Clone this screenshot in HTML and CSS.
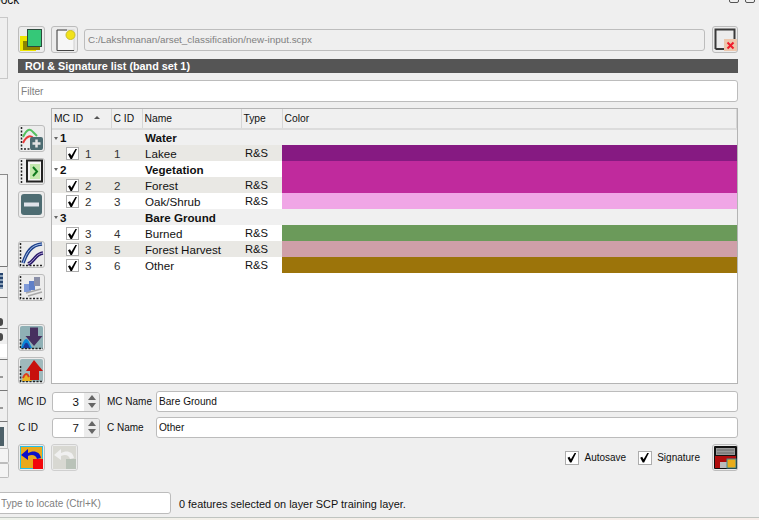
FILE: index.html
```html
<html>
    <head>
        <meta charset="utf-8">
        <title>ROI &amp; Signature list</title>
        <link rel="stylesheet" href="styles.css">
    </head>
    <body>
        <div class="page">
            <!-- dock title, cut off by the top of the window -->
            <div class="dockTitle">
                <span class="dockName">Dock</span>
                <span class="winBtns"><i></i><i></i></span>
            </div>

            <div class="dock">
                <!-- what is left of the panel next to this one -->
                <div class="strip">
                    <div class="stripBox"></div>
                    <div class="stripPanel"></div>
                    <div class="stripItem"><b class="tool blue"></b></div>
                    <div class="stripItem lowDot"><b class="tool dot"></b></div>
                    <div class="stripItem white"><b class="tool dot"></b></div>
                    <div class="stripItem lowTick"><b class="tool tick"></b></div>
                    <div class="stripItem lowTick"><b class="tool tick"></b></div>
                    <div class="stripItem last"><b class="tool slate"></b></div>
                    <div class="stripBtn"></div>
                    <div class="stripBtn"></div>
                </div>

                <div class="panel">
                    <div class="fileRow">
                        <button class="iconBtn">
                            <svg viewBox="0 0 25 25"><rect x="1" y="9" width="16" height="15" fill="#efe600"/><rect x="4" y="14" width="17" height="9" fill="#8a8400"/><rect x="8.500" y="2.500" width="14" height="17" fill="#35c878" stroke="#2b4a3c"/></svg>
                        </button>
                        <button class="iconBtn">
                            <svg viewBox="0 0 25 25"><rect x="5" y="3" width="17" height="20.500" fill="#f6f6f6" stroke="#d0d0d0"/><path d="M5 3V23.500H22" fill="none" stroke="#444"/><path d="M5 3H15" fill="none" stroke="#444"/><circle cx="18.500" cy="8" r="4.500" fill="#f2e21a" stroke="#c9bf2a"/></svg>
                        </button>
                        <input class="pathBox" type="text" value="C:/Lakshmanan/arset_classification/new-input.scpx" readonly>
                        <button class="iconBtn">
                            <svg viewBox="0 0 25 25"><path d="M2.500 22V2.500H21.500V12M2.500 22H12" fill="none" stroke="#3a3a3a" stroke-width="2"/><rect x="11" y="12" width="13" height="12" fill="#ecc7ad"/><path d="M14.500 15.500L20.500 21.500M20.500 15.500L14.500 21.500" stroke="#f01c2c" stroke-width="2"/></svg>
                        </button>
                    </div>

                    <div class="titleBar">ROI &amp; Signature list (band set 1)</div>

                    <input class="textBox filter" type="text" placeholder="Filter">

                    <div class="listRow">
                        <div class="sideBtns">
                            <button class="iconBtn">
                                <svg viewBox="0 0 25 25"><path d="M2.500 1V23H23" fill="none" stroke="#222" stroke-dasharray="2 1.500" stroke-width="1.500"/><path d="M4 11C8 3 11 2 14 6L18 10" fill="none" stroke="#55c060" stroke-width="2"/><path d="M4 17C8 9 12 9 15 13" fill="none" stroke="#e83a3a" stroke-width="2"/><rect x="11" y="11" width="13" height="13" rx="2" fill="#4d6c72"/><path d="M17.500 13.500V21.500M13.500 17.500H21.500" stroke="#e4e4e4" stroke-width="2.500"/></svg>
                            </button>
                            <button class="iconBtn">
                                <svg viewBox="0 0 25 25"><path d="M2.500 1V24" fill="none" stroke="#222" stroke-dasharray="2 1.500" stroke-width="1.500"/><rect x="8" y="1.500" width="15" height="21" fill="#f4f4f4" stroke="#222" stroke-width="2"/><rect x="11" y="5" width="10" height="15" fill="#c3e8ae"/><path d="M14 8L18 12.500L14 17" fill="none" stroke="#0f7a1e" stroke-width="2"/></svg>
                            </button>
                            <button class="iconBtn">
                                <svg viewBox="0 0 25 25"><rect x="2" y="2" width="21" height="21" rx="3" fill="#4d6c72"/><rect x="5" y="10.500" width="15" height="4" fill="#dfe3ea"/></svg>
                            </button>
                            <button class="iconBtn farBtn">
                                <svg viewBox="0 0 25 25"><path d="M1.500 1V23.500H24" fill="none" stroke="#222" stroke-dasharray="2 1.500" stroke-width="1.500"/><path d="M4 21C8 10 12 3 23 2" fill="none" stroke="#1d3f8a" stroke-width="3.500"/><path d="M4 21C8 10 12 3 23 2" fill="none" stroke="#a8c4ea" stroke-width="1"/><path d="M9 22C15 20 16 12 24 11" fill="none" stroke="#2a1a6a" stroke-width="3.500"/><path d="M9 22C15 20 16 12 24 11" fill="none" stroke="#b0a4d8" stroke-width="1"/></svg>
                            </button>
                            <button class="iconBtn">
                                <svg viewBox="0 0 25 25"><path d="M1.500 1V23.500H24" fill="none" stroke="#222" stroke-dasharray="2 1.500" stroke-width="1.500"/><rect x="5" y="9" width="7" height="8" fill="#7f9ad8"/><rect x="10" y="6" width="6" height="9" fill="#5f7fc8"/><rect x="15" y="2" width="6" height="9" fill="#8a8fa8"/><path d="M7 18L22 14M9 21L23 17" stroke="#a8a8a8" stroke-width="1.500"/></svg>
                            </button>
                            <button class="iconBtn farBtn">
                                <svg viewBox="0 0 25 25"><rect x="1" y="1" width="23" height="23" rx="2" fill="#8fb0b5"/><path d="M1.500 14V23.500H24" fill="none" stroke="#222" stroke-dasharray="2 1.500" stroke-width="1.500"/><path d="M2 23C5 13 8 11 11 19L13 23Z" fill="#0a86d8"/><path d="M4 23C6 17 8 16 10 21L11 23Z" fill="#1a3a9a"/><path d="M11 2.500H19V11H23.500L15 21L6.500 11H11Z" fill="#47305f"/></svg>
                            </button>
                            <button class="iconBtn">
                                <svg viewBox="0 0 25 25"><rect x="1" y="1" width="23" height="23" rx="2" fill="#9fb9bc"/><path d="M1.500 8V23.500H24" fill="none" stroke="#222" stroke-dasharray="2 1.500" stroke-width="1.500"/><path d="M3 23C5 14 8 13 11 19L13 23Z" fill="#e8b020"/><path d="M4 20C6 15 8 15 10 19" fill="none" stroke="#d83a20" stroke-width="2"/><path d="M15 2L24 13H20V22H11V13H7Z" fill="#c8100c"/></svg>
                            </button>
                        </div>

                        <div class="listWrap">
                            <table class="sigTable">
                                <colgroup>
                                    <col class="colMc"><col class="colC"><col class="colName"><col class="colType"><col>
                                </colgroup>
                                <thead>
                                    <tr>
                                        <th>MC ID<span class="sortUp"></span></th>
                                        <th>C ID</th>
                                        <th>Name</th>
                                        <th>Type</th>
                                        <th>Color</th>
                                    </tr>
                                </thead>
                                <tbody>
                                    <tr class="groupRow">
                                        <td><span class="twist"></span>1</td><td></td><td>Water</td><td></td><td></td>
                                    </tr>
                                    <tr class="altRow">
                                        <td><span class="chk"></span>1</td><td class="cid">1</td><td>Lakee</td><td class="typeCell">R&amp;S</td><td class="colLakee"></td>
                                    </tr>
                                    <tr class="groupRow white">
                                        <td><span class="twist"></span>2</td><td></td><td>Vegetation</td><td></td><td class="colForest"></td>
                                    </tr>
                                    <tr class="altRow">
                                        <td><span class="chk"></span>2</td><td class="cid">2</td><td>Forest</td><td class="typeCell">R&amp;S</td><td class="colForest"></td>
                                    </tr>
                                    <tr>
                                        <td><span class="chk"></span>2</td><td class="cid">3</td><td>Oak/Shrub</td><td class="typeCell">R&amp;S</td><td class="colOak"></td>
                                    </tr>
                                    <tr class="groupRow">
                                        <td><span class="twist"></span>3</td><td></td><td>Bare Ground</td><td></td><td></td>
                                    </tr>
                                    <tr>
                                        <td><span class="chk"></span>3</td><td class="cid">4</td><td>Burned</td><td class="typeCell">R&amp;S</td><td class="colBurned"></td>
                                    </tr>
                                    <tr class="altRow">
                                        <td><span class="chk"></span>3</td><td class="cid">5</td><td>Forest Harvest</td><td class="typeCell">R&amp;S</td><td class="colHarvest"></td>
                                    </tr>
                                    <tr>
                                        <td><span class="chk"></span>3</td><td class="cid">6</td><td>Other</td><td class="typeCell">R&amp;S</td><td class="colOther"></td>
                                    </tr>
                                </tbody>
                            </table>
                        </div>
                    </div>

                    <div class="formRow">
                        <label class="idLabel">MC ID</label>
                        <div class="spin"><span class="spinVal">3</span><span class="spinArrows"><i class="up"></i><i class="down"></i></span></div>
                        <label class="nameLabel">MC Name</label>
                        <input class="textBox" type="text" value="Bare Ground">
                    </div>
                    <div class="formRow second">
                        <label class="idLabel">C ID</label>
                        <div class="spin"><span class="spinVal">7</span><span class="spinArrows"><i class="up"></i><i class="down"></i></span></div>
                        <label class="nameLabel">C Name</label>
                        <input class="textBox" type="text" value="Other">
                    </div>

                    <div class="actionRow">
                        <button class="iconBtn">
                            <svg viewBox="0 0 25 25"><rect x="1" y="1" width="23" height="23" fill="#22c0e8"/><rect x="2" y="2" width="21" height="21" fill="#e9a91c"/><path d="M22 13C21 6 14 5 9 8L9 4L2 10L9 15V11C13 9 17 10 18 14Z" fill="#0c10c8"/><rect x="14" y="14" width="10" height="10" fill="#f2070c"/></svg>
                        </button>
                        <button class="iconBtn offBtn">
                            <svg viewBox="0 0 25 25"><rect x="1" y="1" width="23" height="23" fill="#d8d8d2"/><path d="M22 13C21 6 14 5 9 8L9 4L2 10L9 15V11C13 9 17 10 18 14Z" fill="#f0f0f0"/><rect x="14" y="14" width="10" height="10" fill="#b9c2b8"/></svg>
                        </button>
                        <div class="pushRight">
                            <span class="chk"></span><span class="chkText">Autosave</span>
                            <span class="chk"></span><span class="chkText">Signature</span>
                            <button class="iconBtn">
                                <svg viewBox="0 0 25 25"><rect x="1" y="1" width="23" height="23" rx="1" fill="#111"/><rect x="3" y="3" width="19" height="7" fill="#999"/><path d="M4 5H21M4 8H21" stroke="#666"/><rect x="2" y="11" width="21" height="12" fill="#b00d0d"/><rect x="7" y="17" width="9" height="6" fill="#bcbcbc"/><rect x="14" y="14" width="9" height="9" fill="#e9ad1c" stroke="#3b8a9a"/></svg>
                            </button>
                        </div>
                    </div>
                </div>
            </div>

            <div class="statusRow">
                <input class="locator" type="text" placeholder="Type to locate (Ctrl+K)">
                <span class="statusText">0 features selected on layer SCP training layer.</span>
            </div>
            <div class="desktop"></div>
        </div>
    </body>
</html>
```

FILE: styles.css
```css
*{
    margin: 0;
    padding: 0;
    box-sizing: border-box;
}
body{
    background-color: #efefef;
    font-family: "Liberation Sans", Arial, sans-serif;
    font-size: 11px;
    color: #111;
    overflow: hidden;
}
.page{
    width: 759px;
    height: 520px;
    display: flex;
    flex-direction: column;
    overflow: hidden;
}

/* top title, only the bottom of it shows */
.dockTitle{
    height: 10px;
    flex: none;
    display: flex;
    justify-content: space-between;
    align-items: flex-end;
    overflow: hidden;
}
.dockName{
    align-self: flex-start;
    line-height: 0;
    font-size: 12px;
    margin-left: -8px;
}
.winBtns{
    display: flex;
    gap: 6px;
    margin-right: 4px;
    margin-bottom: 7px;
}
.winBtns i{
    display: block;
    width: 10px;
    height: 9px;
    border: 1px solid #555;
    border-radius: 2px;
}

.dock{
    height: 482px;
    flex: none;
    display: flex;
}

/* left strip */
.strip{
    width: 9px;
    flex: none;
    padding-top: 7px;
    display: flex;
    flex-direction: column;
}
.stripBox{
    height: 62px;
    border-top: 1px solid #c8c8c8;
    border-bottom: 1px solid #c8c8c8;
    border-right: 1px solid #c8c8c8;
    width: 8px;
    margin-bottom: 95px;
}
.stripPanel{
    height: 92px;
    width: 8px;
    border-top: 1px solid #8a8a8a;
    border-right: 1px solid #8a8a8a;
    background-color: #f3f3f3;
}
.stripItem{
    height: 31px;
    width: 8px;
    border-top: 1px solid #777;
    border-right: 1px solid #c4c4c4;
    padding-top: 9px;
    overflow: hidden;
}
.stripItem.lowDot{
    padding-top: 20px;
}
.stripItem.lowTick{
    padding-top: 13px;
}
.stripItem.white{
    background: linear-gradient(#efefef 50%, #fff 50%, #fff 92%, #efefef 92%);
    padding-top: 4px;
}
.stripItem.last{
    height: 27px;
    padding-top: 5px;
}
.tool{
    display: block;
    width: 3px;
}
.tool.blue{
    height: 16px;
    margin-top: -3px;
    background: repeating-linear-gradient(#26446e 0 2px, #8aa0b8 2px 4px);
}
.tool.dot{
    height: 8px;
    background-color: #4a4a4a;
    border-radius: 0 4px 4px 0;
}
.tool.tick{
    height: 2px;
    margin-top: 3px;
    background-color: #999;
}
.tool.slate{
    width: 4px;
    height: 19px;
    background-color: #4d6068;
}
.stripBtn{
    height: 15px;
    width: 9px;
    background-color: #f4f4f4;
    border: 1px solid #bdbdbd;
    border-left: 0;
    border-radius: 0 2px 2px 0;
}

/* main panel */
.panel{
    width: 729px;
    padding-left: 9px;
    padding-top: 16px;
    display: flex;
    flex-direction: column;
}
.iconBtn{
    width: 27px;
    height: 27px;
    flex: none;
    background-color: #ececec;
    border: 1px solid #bcbcbc;
    border-radius: 3px;
    display: block;
}
.iconBtn svg{
    width: 25px;
    height: 25px;
    display: block;
}
.offBtn{
    border-color: #cfcfcf;
}
.fileRow{
    display: flex;
    align-items: center;
    gap: 6px;
    height: 27px;
}
.fileRow .iconBtn:last-child{
    margin-left: 1px;
    width: 26px;
}
.pathBox{
    width: 622px;
    height: 22px;
    border: 1px solid #bdbdbd;
    border-radius: 3px;
    background-color: #efefef;
    padding-left: 3px;
    font: 9.900px "Liberation Sans", Arial, sans-serif;
    color: #808080;
}
.titleBar{
    height: 14px;
    line-height: 14px;
    margin-top: 6px;
    background-color: #555;
    color: #fff;
    font-weight: bold;
    font-size: 10.800px;
    padding-left: 7px;
}
.textBox{
    height: 22px;
    border: 1px solid #bcbcbc;
    border-radius: 3px;
    background-color: #fff;
    padding-left: 2px;
    font: 10.100px "Liberation Sans", Arial, sans-serif;
    color: #111;
}
.textBox::placeholder{
    color: #808080;
}
.filter{
    margin-top: 7px;
    width: 720px;
}

/* buttons + table */
.listRow{
    display: flex;
    margin-top: 6px;
    height: 276px;
}
.sideBtns{
    width: 33px;
    flex: none;
    padding-top: 17px;
    display: flex;
    flex-direction: column;
    gap: 6px;
}
.farBtn{
    margin-top: 17px;
}
.listWrap{
    width: 687px;
    height: 276px;
    border: 1px solid #b4b4b4;
    background-color: #fff;
    overflow: hidden;
}
.sigTable{
    width: 685px;
    table-layout: fixed;
    border-collapse: collapse;
    font-size: 11.600px;
}
.colMc{ width: 59px; }
.colC{ width: 31px; }
.colName{ width: 99px; }
.colType{ width: 41px; }
.sigTable th{
    height: 20px;
    background-color: #f0f0f0;
    border-right: 1px solid #d6d6d6;
    border-bottom: 2px solid #dcdcdc;
    font-weight: normal;
    font-size: 10.300px;
    text-align: left;
    padding-left: 2px;
    position: relative;
}
.sortUp{
    position: absolute;
    right: 11px;
    top: 7px;
    border-left: 3px solid transparent;
    border-right: 3px solid transparent;
    border-bottom: 3px solid #555;
}
.sigTable td{
    height: 16px;
    padding: 0 0 0 3px;
    white-space: nowrap;
    overflow: hidden;
}
.sigTable td.typeCell{
    padding-left: 4px;
    font-size: 11.200px;
}
.sigTable tr td:first-child{
    padding-left: 33px;
    position: relative;
    color: #333;
}
.sigTable td.cid{
    padding-left: 3px;
    color: #333;
}
.groupRow td{
    background-color: #f0f0f0;
    font-weight: bold;
}
.groupRow.white td{
    background-color: #fff;
}
.groupRow td:first-child{
    padding-left: 8px !important;
    color: #111 !important;
}
.altRow td{
    background-color: #e9e8e4;
}
.twist{
    display: inline-block;
    vertical-align: middle;
    width: 0;
    height: 0;
    margin: 0 2px 1px -6px;
    border-left: 2px solid transparent;
    border-right: 2px solid transparent;
    border-top: 3px solid #666;
}
.chk{
    display: inline-block;
    width: 13px;
    height: 13px;
    background-color: #fff;
    border: 1px solid #adadad;
    position: relative;
}
/* check mark */
.chk::after{
    content: "";
    position: absolute;
    left: 1px;
    top: 1px;
    width: 9px;
    height: 10px;
    background-color: #000;
    clip-path: polygon(0 52%, 22% 42%, 38% 68%, 82% 0, 100% 0, 44% 100%, 28% 100%);
}
td .chk{
    position: absolute;
    left: 14px;
    top: 2px;
}
.colLakee{ background-color: #861a82 !important; }
.colForest{ background-color: #c02a9d !important; }
.colOak{ background-color: #f0a6e6 !important; }
.colBurned{ background-color: #6b9a5a !important; }
.colHarvest{ background-color: #cf9fa8 !important; }
.colOther{ background-color: #9c740a !important; }

/* id and name form */
.formRow{
    display: flex;
    align-items: center;
    margin-top: 7px;
    height: 21px;
}
.formRow.second{
    margin-top: 5px;
}
.idLabel{
    width: 34px;
    flex: none;
    font-size: 10px;
}
.nameLabel{
    width: 49px;
    margin-left: 7px;
    flex: none;
    font-size: 10px;
    white-space: nowrap;
}
.formRow .textBox{
    width: 582px;
    height: 21px;
}
.spin{
    width: 48px;
    height: 20px;
    flex: none;
    background-color: #fff;
    border: 1px solid #bcbcbc;
    border-radius: 3px;
    display: flex;
    font-size: 11.600px;
    overflow: hidden;
}
.spinVal{
    flex: 1;
    text-align: right;
    padding-right: 5px;
    line-height: 18px;
}
.spinArrows{
    width: 15px;
    background-color: #ececec;
    display: flex;
    flex-direction: column;
    align-items: center;
    justify-content: center;
    gap: 3px;
}
.spinArrows i{
    display: block;
    border-left: 4px solid transparent;
    border-right: 4px solid transparent;
}
.spinArrows .up{
    border-bottom: 5px solid #666;
}
.spinArrows .down{
    border-top: 5px solid #666;
}

.actionRow{
    display: flex;
    gap: 6px;
    margin-top: 6px;
    height: 27px;
}
.pushRight{
    margin-left: auto;
    display: flex;
    align-items: center;
}
.pushRight .iconBtn{
    margin-left: 12px;
    width: 26px;
}
.pushRight .chk{
    width: 14px;
    height: 14px;
}
.chkText{
    margin-left: 5px;
    margin-right: 12px;
    font-size: 10px;
}
.pushRight .chkText:nth-of-type(4){
    margin-right: 0;
}

/* bottom status */
.statusRow{
    height: 25px;
    flex: none;
    display: flex;
    align-items: flex-start;
}
.locator{
    width: 174px;
    height: 22px;
    margin-left: -3px;
    border: 1px solid #bcbcbc;
    border-radius: 3px;
    background-color: #fff;
    padding-left: 3px;
    font: 10px "Liberation Sans", Arial, sans-serif;
}
.locator::placeholder{
    color: #808080;
}
.statusText{
    margin-left: 8px;
    line-height: 24px;
    font-size: 10.900px;
}
.desktop{
    flex: 1;
    border-top: 1px solid #bfc4c0;
    background: linear-gradient(90deg, #eef2ea, #f5efe9 40%, #f6ece8);
}
```
